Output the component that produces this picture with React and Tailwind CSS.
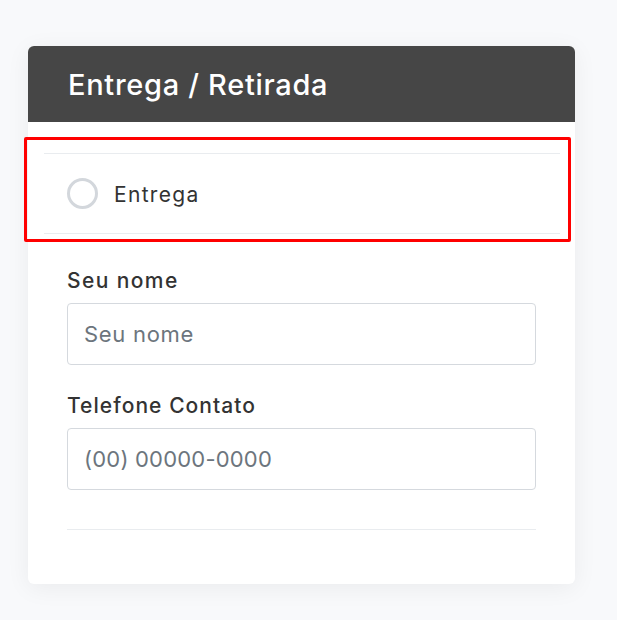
export default function App() {
  return (
    <div className="min-h-[620px] w-full bg-[#f8f9fb] pt-[46px] pl-[28px]" style={{ fontFamily: 'Inter, "Noto Sans", sans-serif' }}>
      <div className="w-[547px] rounded-[6px] bg-white shadow-[0_4px_24px_rgba(0,0,0,0.06)]">
        <div className="h-[76px] rounded-t-[6px] bg-[#464646] pl-[40px] flex items-center">
          <h2 className="text-[29px] font-medium text-white leading-none tracking-[0.7px]">Entrega / Retirada</h2>
        </div>
        <div className="pt-[15px] pb-[54px]">
          <div className="ml-[-4px] mr-[4px] border-[3px] border-[#ff0000] pl-[17px] pr-[8px] pt-[13px] pb-[5px] rounded-[2px]">
            <div className="h-[81px] border-y border-[#e9ecef] flex items-center pl-[23px]">
              <span className="w-[31px] h-[31px] rounded-full border-[3px] border-[#d3d7dc]"></span>
              <span className="ml-[16px] text-[21px] tracking-[1.3px] text-[#333] pt-[2px]">Entrega</span>
            </div>
          </div>
          <div className="px-[39px]">
            <div className="mt-[26px] text-[21px] font-medium text-[#333] leading-[26px] tracking-[1.4px]">Seu nome</div>
            <div className="mt-[9px] h-[62px] rounded-[4px] border border-[#d5d9de] flex items-center pl-[16px] text-[22px] tracking-[0.7px] text-[#6c757d]">Seu nome</div>
            <div className="mt-[28px] text-[21px] font-medium text-[#333] leading-[26px] tracking-[1.05px]">Telefone Contato</div>
            <div className="mt-[9px] h-[62px] rounded-[4px] border border-[#d5d9de] flex items-center pl-[16px] text-[22px] tracking-[0.2px] text-[#6c757d]">(00) 00000-0000</div>
            <div className="mt-[39px] border-t border-[#e9ecef]"></div>
          </div>
        </div>
      </div>
    </div>
  );
}
